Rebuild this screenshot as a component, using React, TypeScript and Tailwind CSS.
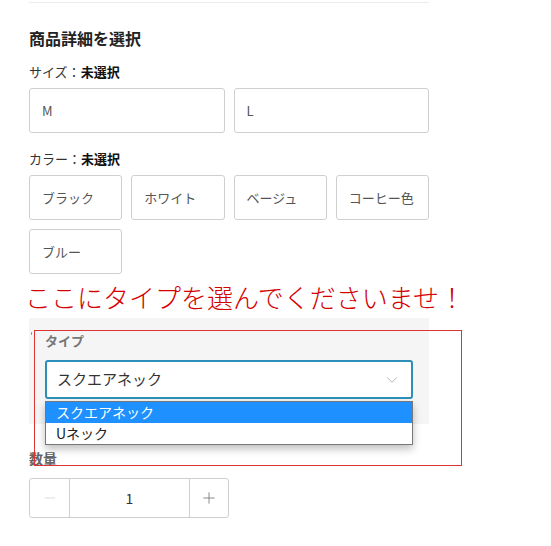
import { ChevronDown, Minus, Plus } from 'lucide-react';

const sizes = ['M', 'L'];
const colors = ['ブラック', 'ホワイト', 'ベージュ', 'コーヒー色', 'ブルー'];

function Choice({ label, className = '' }: { label: string; className?: string }) {
  return (
    <button
      type="button"
      className={`flex h-[45px] items-center rounded-[3px] border border-[#cfcfcf] bg-white pl-[12px] text-left text-[13px] text-[#555] ${className}`}
    >
      {label}
    </button>
  );
}

export default function App() {
  return (
    <div
      className="relative min-h-[546px] w-full bg-white px-[29px] pt-[2px]"
      style={{ fontFamily: '"Noto Sans CJK JP", "Noto Sans", sans-serif' }}
    >
      <div className="w-[400px]">
        <div className="border-t border-[#ececec]" />

        <h2 className="mt-[23px] text-[16px] leading-[24px] font-bold text-[#222]">商品詳細を選択</h2>

        <p className="mt-[12px] text-[13px] leading-[20px] text-[#333]">
          サイズ：<span className="font-bold text-[#111]">未選択</span>
        </p>
        <div className="mt-[6px] grid grid-cols-2 gap-[9px]">
          {sizes.map((s) => (
            <Choice key={s} label={s} className="text-[12px]" />
          ))}
        </div>

        <p className="mt-[16px] text-[13px] leading-[20px] text-[#333]">
          カラー：<span className="font-bold text-[#111]">未選択</span>
        </p>
        <div className="mt-[6px] grid grid-cols-4 gap-[9px]">
          {colors.map((c) => (
            <Choice key={c} label={c} />
          ))}
        </div>

        <p className="mt-[5px] -ml-[4px] w-[460px] text-[26px] leading-[36px] font-light text-[#d40000]">
          ここにタイプを選んでくださいませ！
        </p>

        {/* タイプ選択 */}
        <div className="relative mt-[3px] h-[106px] bg-[#f5f5f5] px-[16px] pt-[13px]">
          <span className="absolute top-[14px] left-[2px] h-[3px] w-px bg-[#999]" />
          <p className="text-[13px] leading-[20px] font-bold text-[#777]">タイプ</p>
          <div className="mt-[9px] flex h-[39px] items-center justify-between rounded-[3px] border-2 border-[#2d8fb8] bg-white pr-[10px] pl-[10px]">
            <span className="text-[15px] text-[#333]">スクエアネック</span>
            <ChevronDown size={18} strokeWidth={1} className="text-[#999]" />
          </div>
          <ul className="absolute top-[83px] right-[16px] left-[16px] z-10 border border-[#777] bg-white text-[14px] leading-[21px] shadow-[0_4px_8px_rgba(0,0,0,0.25)]">
            <li className="bg-[#1e90ff] pl-[10px] text-white">スクエアネック</li>
            <li className="pl-[10px] text-[#222]">Uネック</li>
          </ul>
        </div>

        <p className="mt-[25px] text-[14px] leading-[18px] font-bold text-[#666]">数量</p>
        <div className="mt-[11px] flex h-[40px] w-[200px] rounded-[3px] border border-[#cfcfcf]">
          <button type="button" className="flex w-[40px] items-center justify-center border-r border-[#cfcfcf] text-[#ccc]">
            <Minus size={16} strokeWidth={1} />
          </button>
          <div className="flex flex-1 items-center justify-center text-[14px] text-[#333]">1</div>
          <button type="button" className="flex w-[39px] items-center justify-center border-l border-[#cfcfcf] text-[#666]">
            <Plus size={18} strokeWidth={1} />
          </button>
        </div>
      </div>

      {/* 赤枠 */}
      <div className="pointer-events-none absolute top-[330px] left-[34px] h-[136px] w-[428px] border border-[#d33]" />
    </div>
  );
}
